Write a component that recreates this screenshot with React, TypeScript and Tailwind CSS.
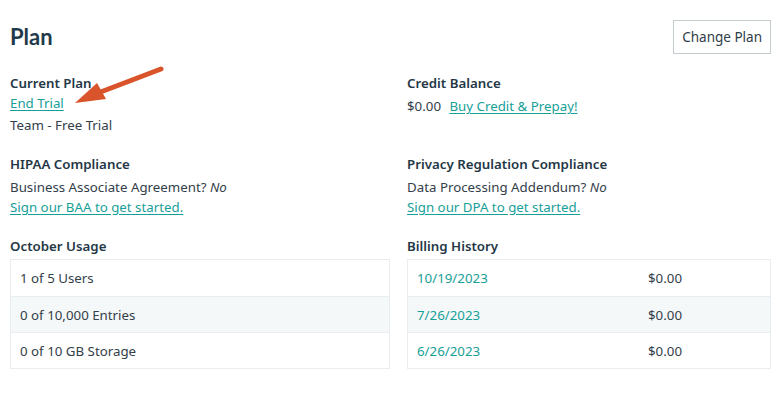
import React from 'react'

const usage = ['1 of 5 Users', '0 of 10,000 Entries', '0 of 10 GB Storage']
const billing = [
  { date: '10/19/2023', amount: '$0.00' },
  { date: '7/26/2023', amount: '$0.00' },
  { date: '6/26/2023', amount: '$0.00' },
]

const link = 'text-[#17a098] underline underline-offset-2'
const label = 'font-semibold text-[#243746]'

export default function App() {
  return (
    <div className="relative min-h-[404px] bg-white pl-[10px] pr-[9px] pt-5 font-['Noto_Sans',sans-serif] text-[13.3px] leading-5 text-[#33404a]">
      <div className="flex items-start justify-between">
        <h1 className="pt-[3px] font-['Lato',sans-serif] text-[22px] font-bold leading-7 text-[#1f3a4a]">
          Plan
        </h1>
        <button
          type="button"
          className="h-[34px] border border-[#c5ccd0] px-[8px] text-[13.5px] text-[#2e3d48]"
        >
          Change Plan
        </button>
      </div>

      <div className="mt-[19px] grid grid-cols-[397px_1fr]">
        <div>
          <div className={label}>Current Plan</div>
          <a className={`${link} block`}>End Trial</a>
          <div className="mt-[2px]">Team - Free Trial</div>
        </div>
        <div>
          <div className={label}>Credit Balance</div>
          <div className="mt-[3px]">
            $0.00 <a className={`${link} ml-[5px]`}>Buy Credit &amp; Prepay!</a>
          </div>
        </div>

        <div className="mt-[19px]">
          <div className={label}>HIPAA Compliance</div>
          <div className="mt-[3px]">
            Business Associate Agreement? <em>No</em>
          </div>
          <a className={`${link} block`}>Sign our BAA to get started.</a>
        </div>
        <div className="mt-[19px]">
          <div className={label}>Privacy Regulation Compliance</div>
          <div className="mt-[3px]">
            Data Processing Addendum? <em>No</em>
          </div>
          <a className={`${link} block`}>Sign our DPA to get started.</a>
        </div>

        <div className="mt-[19px] pr-[17px]">
          <div className={`${label} mb-[3px]`}>October Usage</div>
          <div className="border border-[#e8eef0]">
            {usage.map((u, i) => (
              <div
                key={u}
                className={`flex h-9 items-center px-[9px] ${i > 0 ? 'border-t border-[#e8eef0]' : ''} ${i === 1 ? 'bg-[#f5f8f9]' : ''}`}
              >
                {u}
              </div>
            ))}
          </div>
        </div>
        <div className="mt-[19px]">
          <div className={`${label} mb-[3px]`}>Billing History</div>
          <div className="border border-[#e8eef0]">
            {billing.map((b, i) => (
              <div
                key={b.date}
                className={`grid h-9 grid-cols-[231px_1fr] items-center px-[9px] ${i > 0 ? 'border-t border-[#e8eef0]' : ''} ${i === 1 ? 'bg-[#f5f8f9]' : ''}`}
              >
                <span className="text-[#17a098]">{b.date}</span>
                <span>{b.amount}</span>
              </div>
            ))}
          </div>
        </div>
      </div>

      <svg
        className="pointer-events-none absolute left-0 top-0"
        width="200"
        height="120"
        viewBox="0 0 200 120"
      >
        <line x1="161" y1="69" x2="98" y2="93" stroke="#d9542a" strokeWidth="5" strokeLinecap="round" />
        <polygon points="75,103 97,83 106,99" fill="#d9542a" />
      </svg>
    </div>
  )
}
